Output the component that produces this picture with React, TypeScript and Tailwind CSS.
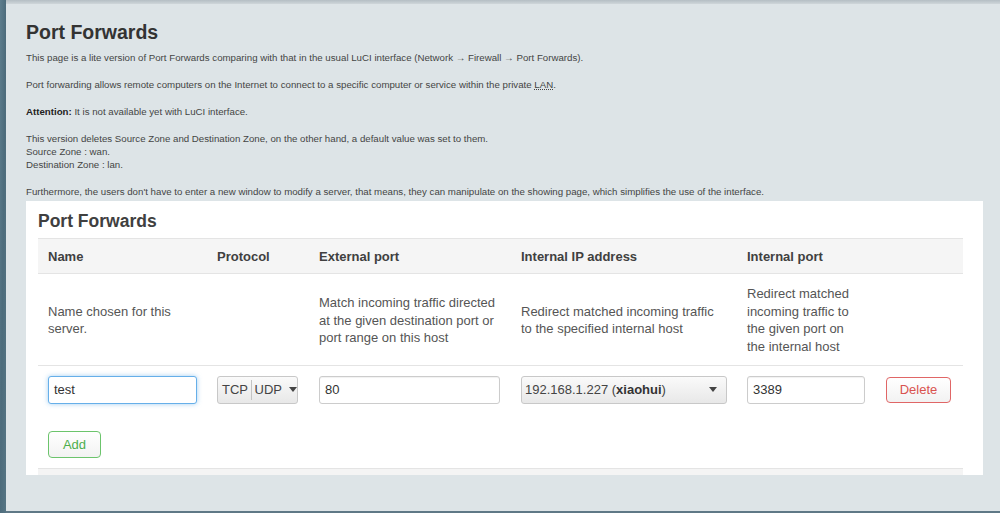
const COLS = "grid grid-cols-[169px_102px_202px_226px_139px_87px]";

function Caret() {
  return (
    <svg className="h-[5px] w-[8px]" viewBox="0 0 8 5" aria-hidden="true">
      <path d="M0 0h8L4 5z" fill="#444" />
    </svg>
  );
}

export default function App() {
  return (
    <div className="flex h-[513px] w-[1000px] overflow-hidden bg-[#dde4e7] font-['Liberation_Sans',Arial,sans-serif]">
      <div className="w-[6px] shrink-0 bg-gradient-to-br from-[#5d7d8d] via-[#4d6c7c] to-[#567584]" />
      <div className="flex min-w-0 flex-1 flex-col">
        <div className="h-[4px] bg-gradient-to-b from-[#b4bec4] to-[#cfd6da]" />
        <div className="flex-1 pl-[20px] pr-[11px] pt-[16px]">
          <h1 className="text-[19.5px] font-bold leading-[24px] text-[#333]">Port Forwards</h1>
          <div className="mt-[7.4px] text-[9.7px] leading-[13.3px] text-[#444]">
            <p className="mb-[13.5px]">
              This page is a lite version of Port Forwards comparing with that in the usual LuCI interface (Network → Firewall → Port Forwards).
            </p>
            <p className="mb-[13.5px]">
              Port forwarding allows remote computers on the Internet to connect to a specific computer or service within the private{" "}
              <span className="underline decoration-dotted">LAN</span>.
            </p>
            <p className="mb-[13.5px]">
              <b className="text-[#222]">Attention:</b> It is not available yet with LuCI interface.
            </p>
            <p className="mb-[13.5px]">
              This version deletes Source Zone and Destination Zone, on the other hand, a default value was set to them.
              <br />
              Source Zone : wan.
              <br />
              Destination Zone : lan.
            </p>
            <p>
              Furthermore, the users don't have to enter a new window to modify a server, that means, they can manipulate on the showing page, which simplifies the use of the interface.
            </p>
          </div>

          <div className="mt-[2.5px] h-[274px] w-[957px] bg-white pl-[12px] pt-[10px]">
            <h3 className="text-[17.5px] font-bold leading-[20px] text-[#404040]">Port Forwards</h3>
            <div className="mt-[7px] w-[925px] text-[13px] text-[#404040]">
              <div className={`${COLS} h-[36px] items-center border-t border-b border-[#e4e4e4] bg-[#f5f5f5] pt-[2px] font-bold`}>
                <div className="pl-[10px]">Name</div>
                <div className="pl-[10px]">Protocol</div>
                <div className="pl-[10px]">External port</div>
                <div className="pl-[10px]">Internal IP address</div>
                <div className="pl-[10px]">Internal port</div>
                <div />
              </div>

              <div className={`${COLS} items-center pb-[9px] pt-[11px] leading-[17.7px] text-[#555]`}>
                <div className="pl-[10px] pr-[10px]">Name chosen for this server.</div>
                <div />
                <div className="pl-[10px] pr-[10px]">Match incoming traffic directed at the given destination port or port range on this host</div>
                <div className="pl-[10px] pr-[10px]">Redirect matched incoming traffic to the specified internal host</div>
                <div className="pl-[10px] pr-[22px]">Redirect matched incoming traffic to the given port on the internal host</div>
                <div />
              </div>

              <div className={`${COLS} items-center border-t border-[#e4e4e4] py-[10px] text-[#333]`}>
                <div className="pl-[10px]">
                  <div className="flex h-[28px] w-[149px] items-center rounded-[3px] border border-[#66afe9] bg-white pl-[5px] shadow-[0_0_5px_rgba(102,175,233,0.6)]">
                    test
                  </div>
                </div>
                <div className="pl-[10px]">
                  <div className="flex h-[28px] w-[81px] items-center rounded-[3px] border border-[#c8c8c8] bg-gradient-to-b from-[#fafafa] to-[#e8e8e8] pl-[4px] text-[#444]">
                    <span>TCP</span>
                    <span className="mx-[3px] h-[20px] w-px bg-[#c4c4c4]" />
                    <span>UDP</span>
                    <span className="ml-[7px] flex items-center">
                      <Caret />
                    </span>
                  </div>
                </div>
                <div className="pl-[10px]">
                  <div className="flex h-[28px] w-[181px] items-center rounded-[3px] border border-[#ccc] bg-white pl-[5px] shadow-[inset_0_1px_1px_rgba(0,0,0,0.06)]">
                    80
                  </div>
                </div>
                <div className="pl-[10px]">
                  <div className="flex h-[28px] w-[206px] items-center justify-between rounded-[3px] border border-[#c8c8c8] bg-gradient-to-b from-[#fafafa] to-[#e8e8e8] pl-[3px] pr-[9px] text-[#444]">
                    <span>
                      192.168.1.227 (<b className="text-[#333]">xiaohui</b>)
                    </span>
                    <Caret />
                  </div>
                </div>
                <div className="pl-[10px]">
                  <div className="flex h-[28px] w-[118px] items-center rounded-[3px] border border-[#ccc] bg-white pl-[5px] shadow-[inset_0_1px_1px_rgba(0,0,0,0.06)]">
                    3389
                  </div>
                </div>
                <div className="pl-[10px]">
                  <button
                    type="button"
                    className="flex h-[26px] w-[65px] items-center justify-center rounded-[4px] border border-[#e06666] bg-gradient-to-b from-white to-[#f2f2f2] text-[#d9534f]"
                  >
                    Delete
                  </button>
                </div>
              </div>

              <div className="pb-[10px] pl-[10px] pt-[17px]">
                <button
                  type="button"
                  className="flex h-[27px] w-[53px] items-center justify-center rounded-[4px] border border-[#6cc46c] bg-gradient-to-b from-white to-[#f2f2f2] text-[#4cae4c]"
                >
                  Add
                </button>
              </div>
              <div className="h-[7px] border-t border-[#e4e4e4] bg-[#f4f4f4]" />
            </div>
          </div>
        </div>
        <div className="h-[2px] bg-[#5f7886]" />
      </div>
    </div>
  );
}
